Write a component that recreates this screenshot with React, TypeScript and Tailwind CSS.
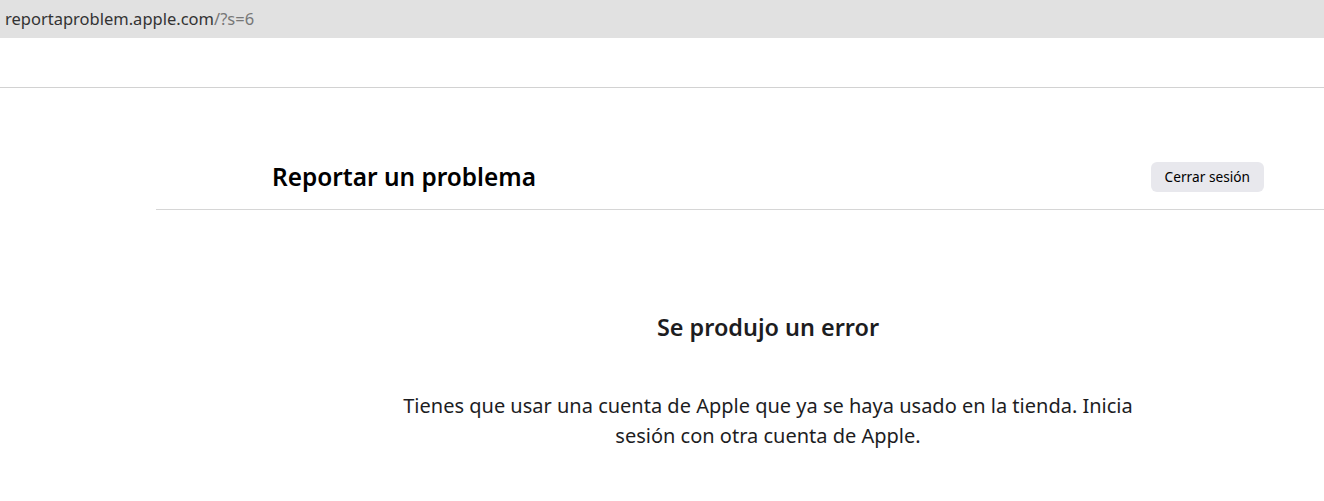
export default function App() {
  return (
    <div className="min-h-[501px] bg-white font-['Noto_Sans',sans-serif] text-[#1d1d1f]">
      {/* browser address strip */}
      <div className="flex h-[38px] items-center bg-[#e1e1e1] pl-[5px] text-[16.5px] text-[#333]">
        <span>reportaproblem.apple.com</span>
        <span className="text-[#777]">/?s=6</span>
      </div>

      <div className="h-[50px] border-b border-[#d2d2d2]" />

      <div className="ml-[156px]">
        <div className="flex h-[122px] items-end border-b border-[#d6d6d6] pb-[13px] pl-[116px] pr-[60px]">
          <div className="flex w-full items-center justify-between">
            <h1 className="text-[24.4px] font-semibold text-black">Reportar un problema</h1>
            <button className="mb-[1px] rounded-[6px] bg-[#e8e8ed] px-[14px] py-[5px] text-[13.7px] text-black">
              Cerrar sesión
            </button>
          </div>
        </div>
      </div>

      <div className="flex flex-col items-center pl-[212px]">
        <h2 className="mt-[100px] text-[23.4px] font-semibold text-[#1d1d1f]">
          Se produjo un error
        </h2>
        <p className="mt-[46px] max-w-[780px] text-center text-[20px] leading-[30px] text-[#1d1d1f]">
          Tienes que usar una cuenta de Apple que ya se haya usado en la tienda. Inicia sesión con
          otra cuenta de Apple.
        </p>
      </div>
    </div>
  );
}
